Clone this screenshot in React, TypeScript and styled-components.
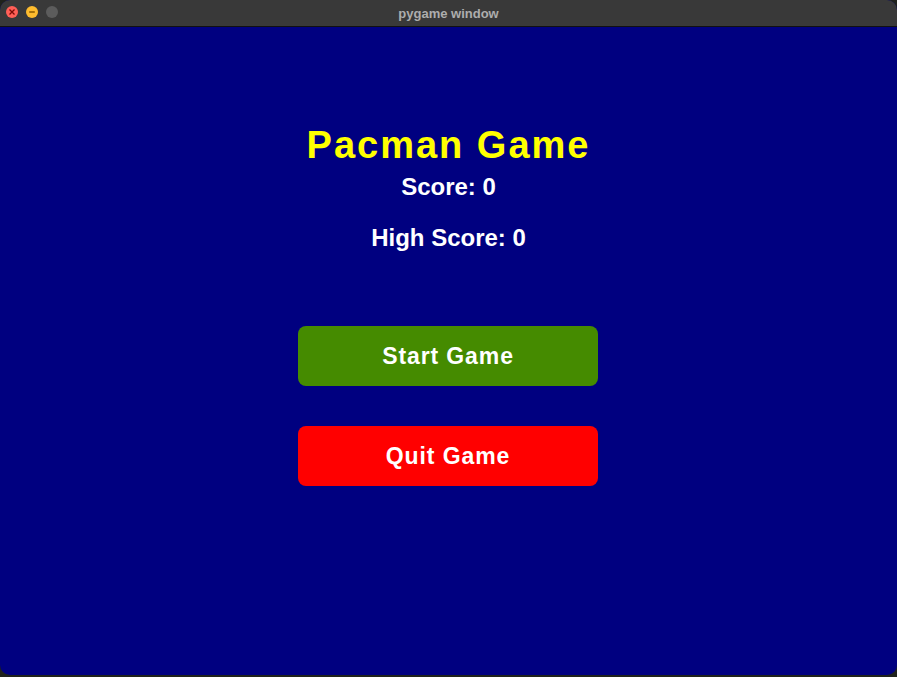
import styled, { createGlobalStyle } from 'styled-components';

const GlobalStyle = createGlobalStyle`
  html, body {
    margin: 0;
    padding: 0;
    background: #1f221c;
    width: 897px;
    height: 677px;
    overflow: hidden;
  }
  * {
    box-sizing: border-box;
  }
`;

const Window = styled.div`
  width: 897px;
  height: 675px;
  display: flex;
  flex-direction: column;
  border-radius: 10px;
  overflow: hidden;
  background: #000080;
`;

const TitleBar = styled.div`
  position: relative;
  height: 27px;
  flex: none;
  display: flex;
  align-items: center;
  justify-content: center;
  background: #393939;
  border-bottom: 1px solid #111;
`;

const Lights = styled.div`
  position: absolute;
  left: 6px;
  top: 6px;
  display: flex;
  gap: 8px;
`;

const Light = styled.span<{ color: string }>`
  width: 12px;
  height: 12px;
  border-radius: 50%;
  background: ${({ color }) => color};
  display: flex;
  align-items: center;
  justify-content: center;
`;

const WindowTitle = styled.span`
  font-family: 'Liberation Sans', Arial, sans-serif;
  font-size: 13px;
  font-weight: bold;
  color: #adadad;
`;

const Screen = styled.main`
  flex: 1;
  display: flex;
  flex-direction: column;
  align-items: center;
  padding-top: 96px;
  font-family: 'Liberation Sans', Arial, sans-serif;
  font-weight: bold;
`;

const Heading = styled.h1`
  margin: 0;
  font-size: 38px;
  line-height: 44px;
  letter-spacing: 2px;
  color: #ffff00;
  font-weight: bold;
`;

const ScoreLine = styled.div<{ gap: number }>`
  margin-top: ${({ gap }) => gap}px;
  font-size: 24px;
  line-height: 28px;
  color: #ffffff;
`;

const Button = styled.button<{ bg: string; gap: number }>`
  margin-top: ${({ gap }) => gap}px;
  margin-right: 1px;
  width: 300px;
  height: 60px;
  border: none;
  border-radius: 8px;
  background: ${({ bg }) => bg};
  color: #ffffff;
  font-family: 'Liberation Sans', Arial, sans-serif;
  font-weight: bold;
  font-size: 23px;
  letter-spacing: 0.9px;
  cursor: pointer;
  display: flex;
  align-items: center;
  justify-content: center;
  padding: 0;
`;

export default function App() {
  return (
    <>
      <GlobalStyle />
      <Window>
        <TitleBar>
          <Lights>
            <Light color="#ff5f57">
              <svg width="8" height="8" viewBox="0 0 8 8">
                <path d="M1.5 1.5 L6.5 6.5 M6.5 1.5 L1.5 6.5" stroke="#7a0a06" strokeWidth="1.3" />
              </svg>
            </Light>
            <Light color="#febc2e">
              <svg width="8" height="8" viewBox="0 0 8 8">
                <path d="M1.2 4 H6.8" stroke="#8a5a00" strokeWidth="1.4" />
              </svg>
            </Light>
            <Light color="#5c5c5c" />
          </Lights>
          <WindowTitle>pygame window</WindowTitle>
        </TitleBar>
        <Screen>
          <Heading>Pacman Game</Heading>
          <ScoreLine gap={6}>Score: 0</ScoreLine>
          <ScoreLine gap={23}>High Score: 0</ScoreLine>
          <Button bg="#458b00" gap={74}>Start Game</Button>
          <Button bg="#ff0000" gap={40}>Quit Game</Button>
        </Screen>
      </Window>
    </>
  );
}
